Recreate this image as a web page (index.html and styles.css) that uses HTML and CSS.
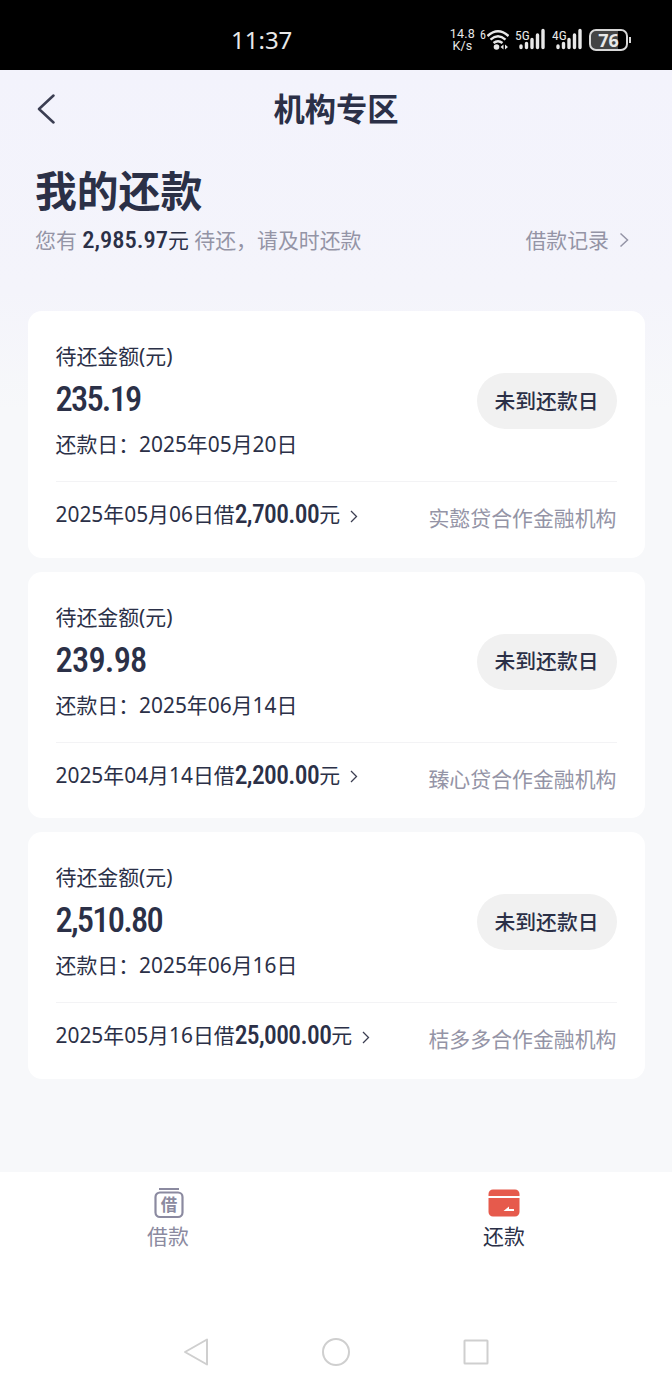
FILE: index.html
```html
<!DOCTYPE html>
<html lang="zh-CN">
<head>
    <meta charset="UTF-8">
    <meta name="viewport" content="width=device-width, initial-scale=1.0">
    <title>机构专区</title>
    <link rel="stylesheet" href="styles.css">
</head>
<body>
    <div class="status-bar">
        <div class="clock">11:37</div>
        <div class="status-icons">
            <div class="net-speed">14.8<br>K/s</div>
            <div class="wifi">
                <span class="wifi-gen">6</span>
                <svg width="22" height="24" viewBox="0 0 22 24">
                    <g fill="none" stroke="#e8e8e8" stroke-width="2.4">
                        <path d="M0.5 8 Q11 -1.5 21.5 8"/>
                        <path d="M3.5 11.6 Q11 5 18.5 11.6"/>
                        <path d="M6.5 15 Q11 11.4 15.5 15"/>
                    </g>
                    <circle cx="9.5" cy="19" r="2.8" fill="#e8e8e8"/>
                    <path d="M16.5 16.5v5l-3-2.5zM18 16.5v5l3-2.5z" fill="#e8e8e8"/>
                </svg>
            </div>
            <svg class="signal" width="31" height="24" viewBox="0 0 31 24">
                <text x="0" y="12" class="icon-text">5G</text>
                <path d="M6 18v1.5M11.5 15.5v4M17 11.5v8M22.5 7v12.5M28 2.5v17" stroke="#e8e8e8" stroke-width="3.4" stroke-linecap="round"/>
            </svg>
            <svg class="signal" width="31" height="24" viewBox="0 0 31 24">
                <text x="0" y="12" class="icon-text">4G</text>
                <path d="M6 18v1.5M11.5 15.5v4M17 11.5v8M22.5 7v12.5M28 2.5v17" stroke="#e8e8e8" stroke-width="3.4" stroke-linecap="round"/>
            </svg>
            <div class="battery"><span class="battery-level">76</span></div>
        </div>
    </div>

    <div class="page">
        <div class="nav-header">
            <svg class="back" width="20" height="32" viewBox="0 0 20 32">
                <path d="M18.5 2.5L4 16l14.5 13.5" fill="none" stroke="#3b3e52" stroke-width="2.5" stroke-linecap="round" stroke-linejoin="round"/>
            </svg>
            <div class="nav-title">机构专区</div>
        </div>

        <div class="summary">
            <h1>我的还款</h1>
            <div class="summary-row">
                <div class="summary-text">您有 <span class="summary-amount"><span class="num">2,985.97</span>元</span> 待还，请及时还款</div>
                <a class="record-link" href="#">借款记录
                    <svg width="10" height="16" viewBox="0 0 10 16"><path d="M1.5 1.5L8.5 8l-7 6.5" fill="none" stroke="#9494a6" stroke-width="1.5"/></svg>
                </a>
            </div>
        </div>

        <div class="loan-list">
            <div class="loan-card">
                <div class="loan-main">
                    <div class="loan-info">
                        <div class="label">待还金额(元)</div>
                        <div class="amount num tight">235.19</div>
                        <div class="due">还款日：2025年05月20日</div>
                    </div>
                    <button class="pill">未到还款日</button>
                </div>
                <div class="loan-foot">
                    <div class="loan-origin">2025年05月06日借<span class="num">2,700.00</span><span class="unit">元</span>
                        <svg width="8" height="13" viewBox="0 0 8 13"><path d="M1 1l5.5 5.5L1 12" fill="none" stroke="#3b3e52" stroke-width="1.3"/></svg>
                    </div>
                    <div class="org">实懿贷合作金融机构</div>
                </div>
            </div>

            <div class="loan-card">
                <div class="loan-main">
                    <div class="loan-info">
                        <div class="label">待还金额(元)</div>
                        <div class="amount num">239.98</div>
                        <div class="due">还款日：2025年06月14日</div>
                    </div>
                    <button class="pill">未到还款日</button>
                </div>
                <div class="loan-foot">
                    <div class="loan-origin">2025年04月14日借<span class="num">2,200.00</span><span class="unit">元</span>
                        <svg width="8" height="13" viewBox="0 0 8 13"><path d="M1 1l5.5 5.5L1 12" fill="none" stroke="#3b3e52" stroke-width="1.3"/></svg>
                    </div>
                    <div class="org">臻心贷合作金融机构</div>
                </div>
            </div>

            <div class="loan-card">
                <div class="loan-main">
                    <div class="loan-info">
                        <div class="label">待还金额(元)</div>
                        <div class="amount num tight">2,510.80</div>
                        <div class="due">还款日：2025年06月16日</div>
                    </div>
                    <button class="pill">未到还款日</button>
                </div>
                <div class="loan-foot">
                    <div class="loan-origin">2025年05月16日借<span class="num">25,000.00</span><span class="unit">元</span>
                        <svg width="8" height="13" viewBox="0 0 8 13"><path d="M1 1l5.5 5.5L1 12" fill="none" stroke="#3b3e52" stroke-width="1.3"/></svg>
                    </div>
                    <div class="org">桔多多合作金融机构</div>
                </div>
            </div>
        </div>
    </div>

    <div class="tab-bar">
        <a class="tab" href="#">
            <svg width="32" height="32" viewBox="0 0 32 32">
                <path d="M7 2h20" stroke="#8b8aa0" stroke-width="2"/>
                <rect x="3.5" y="5.5" width="27" height="24.5" rx="4.5" fill="none" stroke="#8b8aa0" stroke-width="2.2"/>
                <text x="17" y="23.5" text-anchor="middle" class="tab-glyph">借</text>
            </svg>
            <span>借款</span>
        </a>
        <a class="tab active" href="#">
            <svg width="32" height="32" viewBox="0 0 32 32">
                <path d="M.5 9V7A4.5 4.5 0 0 1 5 2.5h22A4.5 4.5 0 0 1 31.5 7v2z" fill="#e65a4c"/>
                <path d="M.5 11h31v14a4.5 4.5 0 0 1-4.5 4.5H5A4.5 4.5 0 0 1 .5 25z" fill="#e65a4c"/>
                <path d="M15.5 24l5.5-4.5V22h5v2z" fill="#fff"/>
            </svg>
            <span>还款</span>
        </a>
    </div>

    <div class="system-nav">
        <svg width="28" height="28" viewBox="0 0 28 28"><path d="M25 1.5v25L3 14z" fill="none" stroke="#cfcfcf" stroke-width="2" stroke-linejoin="round"/></svg>
        <svg width="28" height="28" viewBox="0 0 28 28"><circle cx="14" cy="14" r="13" fill="none" stroke="#cfcfcf" stroke-width="2"/></svg>
        <svg width="28" height="28" viewBox="0 0 28 28"><rect x="2.5" y="2.5" width="23" height="23" rx="0.5" fill="none" stroke="#cfcfcf" stroke-width="2"/></svg>
    </div>
</body>
</html>
```
FILE: styles.css
```css
* {
    box-sizing: border-box;
}
body {
    margin: 0;
    height: 1386px;
    display: flex;
    flex-direction: column;
    background-color: #fff;
    color: #2b3047;
    font-family: "Noto Sans", "Noto Sans CJK SC", sans-serif;
    font-size: 20.9px;
    line-height: 30px;
}
a {
    color: inherit;
    text-decoration: none;
}
svg {
    display: block;
    flex: none;
}
.num {
    font-family: Roboto, "Noto Sans CJK SC", sans-serif;
    font-stretch: 75%;
    font-weight: 500;
}
.status-bar {
    height: 70px;
    padding: 10px 44px 0 231px;
    display: flex;
    justify-content: space-between;
    align-items: center;
    background-color: #000;
    color: #e8e8e8;
}
.clock {
    font-family: "Noto Sans", sans-serif;
    font-size: 24px;
    line-height: 28px;
}
.status-icons {
    display: flex;
    align-items: center;
    gap: 6px;
}
.net-speed {
    font-family: Roboto, sans-serif;
    font-size: 12.5px;
    line-height: 12.5px;
    letter-spacing: 0.2px;
    text-align: center;
}
.wifi {
    display: flex;
    margin-left: -1px;
}
.wifi-gen {
    width: 7px;
    font-family: Roboto, sans-serif;
    font-size: 12px;
    font-stretch: 80%;
    line-height: 14px;
}
.icon-text {
    font-family: Roboto, sans-serif;
    font-size: 13.5px;
    font-stretch: 80%;
    fill: #e8e8e8;
}
.battery {
    position: relative;
    width: 39px;
    height: 22px;
    border: 2px solid #d8d8d8;
    border-radius: 7px;
    background: linear-gradient(90deg, #444 76%, #000 76%);
    font: bold 18px/18px "Noto Sans", sans-serif;
    text-align: center;
}
.battery::after {
    content: "";
    position: absolute;
    right: -5px;
    top: 6px;
    width: 2px;
    height: 6px;
    background-color: #d8d8d8;
}
.page {
    height: 1102px;
    background: linear-gradient(#f3f3fc 0, #f4f4fb 220px, #f7f8fa 340px);
}
.nav-header {
    height: 78px;
    padding: 0 35px;
    display: grid;
    grid-template-columns: 20px 1fr 20px;
    align-items: center;
}
.nav-title {
    text-align: center;
    font-size: 31.3px;
    font-weight: bold;
}
.summary {
    height: 163px;
    padding: 18px 43px 0 35px;
}
h1 {
    margin: 0;
    font-size: 41.8px;
    line-height: 50px;
}
.summary-row {
    height: 30px;
    margin-top: 9px;
    display: flex;
    justify-content: space-between;
    color: #9494a6;
}
.summary-amount {
    color: #2b3047;
}
.summary-amount .num {
    font-size: 24.5px;
}
.record-link {
    display: flex;
    align-items: center;
    gap: 10px;
}
.loan-list {
    padding: 0 27.5px;
    display: flex;
    flex-direction: column;
    gap: 14px;
}
.loan-card {
    height: 246.6px;
    padding: 30px 28px 0;
    border-radius: 14px;
    background-color: #fff;
}
.loan-main {
    height: 141px;
    display: flex;
    justify-content: space-between;
    border-bottom: 1px solid #f3f3f5;
}
.amount {
    height: 58px;
    font-size: 34.5px;
    line-height: 57px;
    letter-spacing: -0.8px;
}
.amount.tight {
    letter-spacing: -1.8px;
}
.pill {
    width: 140px;
    height: 56px;
    margin-top: 32px;
    padding: 0 0 3px;
    border: none;
    border-radius: 28px;
    background-color: #f1f1f1;
    color: #2b3047;
    font-family: inherit;
    font-size: 20.8px;
    font-weight: 500;
}
.loan-foot {
    padding-top: 17px;
    display: flex;
    justify-content: space-between;
}
.loan-origin {
    display: flex;
    align-items: center;
    height: 30px;
}
.loan-origin .num {
    font-size: 25.5px;
    letter-spacing: -0.6px;
}
.loan-origin svg {
    margin: 4px 0 0 10px;
}
.org {
    padding-top: 4px;
    color: #9494a6;
}
.tab-bar {
    height: 146px;
    padding-top: 15px;
    display: flex;
}
.tab {
    flex: 1;
    display: flex;
    flex-direction: column;
    align-items: center;
    gap: 2px;
    color: #8b8aa0;
}
.tab.active {
    color: #2b3047;
}
.tab-glyph {
    font-family: "Noto Sans CJK SC", sans-serif;
    font-size: 16.5px;
    font-weight: bold;
    fill: #8b8aa0;
}
.system-nav {
    padding-top: 20px;
    display: flex;
    justify-content: center;
    gap: 112px;
}
```
